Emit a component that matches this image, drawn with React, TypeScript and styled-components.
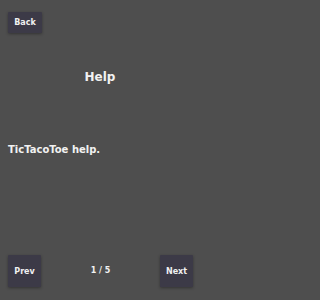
import styled, { createGlobalStyle } from "styled-components";

const GlobalStyle = createGlobalStyle`
  * { box-sizing: border-box; }
  html, body {
    margin: 0;
    padding: 0;
    background: #4e4e4e;
  }
`;

const Screen = styled.div`
  width: 200px;
  height: 300px;
  display: flex;
  flex-direction: column;
  background: #4e4e4e;
  color: #f2f2f2;
  font-family: "DejaVu Sans", "Liberation Sans", sans-serif;
  font-weight: bold;
`;

const Header = styled.div`
  display: flex;
  padding: 12px 0 0 8px;
`;

const NavButton = styled.button<{ $w: number; $h: number }>`
  width: ${(p) => p.$w}px;
  height: ${(p) => p.$h}px;
  padding: 0;
  border: none;
  border-radius: 1px;
  background: #3c3a47;
  color: #f0f0f0;
  font-family: inherit;
  font-weight: bold;
  font-size: 8px;
  box-shadow: 0 1px 3px rgba(0, 0, 0, 0.35);
  display: flex;
  align-items: center;
  justify-content: center;
`;

const Title = styled.h1`
  margin: 37px 0 0;
  font-size: 12px;
  line-height: 14px;
  text-align: center;
`;

const Body = styled.p`
  margin: 60px 0 0 8px;
  font-size: 10px;
  line-height: 12px;
`;

const Footer = styled.div`
  margin-top: auto;
  display: flex;
  align-items: center;
  justify-content: space-between;
  padding: 0 7px 13px 8px;
`;

const PageCount = styled.span`
  font-size: 8px;
  line-height: 10px;
`;

export default function App() {
  return (
    <>
      <GlobalStyle />
      <Screen>
        <Header>
          <NavButton $w={34} $h={21}>Back</NavButton>
        </Header>
        <Title>Help</Title>
        <Body>TicTacoToe help.</Body>
        <Footer>
          <NavButton $w={33} $h={32}>Prev</NavButton>
          <PageCount>1 / 5</PageCount>
          <NavButton $w={33} $h={32}>Next</NavButton>
        </Footer>
      </Screen>
    </>
  );
}
